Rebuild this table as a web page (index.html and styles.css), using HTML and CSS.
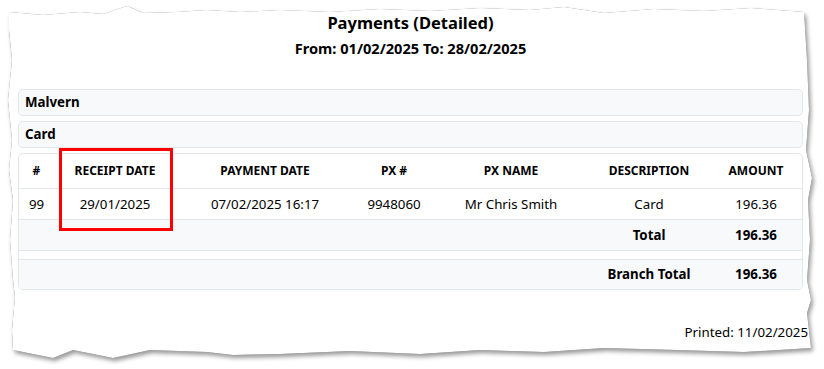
FILE: index.html
```html
<!DOCTYPE html>
<html lang="en">
<head>
<meta charset="utf-8">
<title>Payments (Detailed)</title>
<link rel="stylesheet" href="styles.css">
</head>
<body>
<div class="page">
  <svg class="paper" width="824" height="369" viewBox="0 0 824 369" aria-hidden="true">
    <polygon points="9,12 43,15 80,12 103,14 127,6 143,13 177,12 207,10 240,12 280,10 330,12 380,9 430,11 480,8 530,10 564,7 604,13 654,9 704,11 751,8 804,12 807,60 809,110 806,150 812,178 808,200 810,240 807,280 811,300 807,313 811,348 744,352 677,350 604,348 544,352 480,350 420,354 350,351 280,354 233,355 207,352 150,350 113,358 73,350 53,358 13,350 12,330 15,297 13,280 10,240 13,200 9,170 12,140 8,100 12,60 9,30"/>
  </svg>
  <div class="content">
    <header class="report-head">
      <h1 class="title">Payments (Detailed)</h1>
      <p class="range">From: 01/02/2025 To: 28/02/2025</p>
    </header>
    <div class="group">Malvern</div>
    <div class="group">Card</div>
    <div class="report-table">
      <table>
        <colgroup>
          <col class="c1"><col class="c2"><col class="c3"><col class="c4"><col class="c5"><col class="c6"><col class="c7">
        </colgroup>
        <thead>
          <tr>
            <th>#</th><th>RECEIPT DATE</th><th>PAYMENT DATE</th><th>PX #</th><th>PX NAME</th><th>DESCRIPTION</th><th>AMOUNT</th>
          </tr>
        </thead>
        <tbody>
          <tr class="row">
            <td>99</td><td>29/01/2025</td><td>07/02/2025 16:17</td><td>9948060</td><td>Mr Chris Smith</td><td>Card</td><td>196.36</td>
          </tr>
          <tr class="total">
            <td colspan="5"></td><td>Total</td><td>196.36</td>
          </tr>
          <tr class="spacer"><td colspan="7"></td></tr>
          <tr class="total branch">
            <td colspan="5"></td><td>Branch Total</td><td>196.36</td>
          </tr>
        </tbody>
      </table>
    </div>
    <p class="printed">Printed: 11/02/2025</p>
  </div>
  <div class="highlight"></div>
</div>
</body>
</html>
```

FILE: styles.css
```css
* { box-sizing: border-box; }
html, body { margin: 0; padding: 0; background: #ffffff; }
body {
  font-family: "Noto Sans", "Open Sans", sans-serif;
  color: #000;
  font-size: 13.3px;
}
.page {
  position: relative;
  width: 824px;
  height: 369px;
  overflow: hidden;
}
.paper {
  position: absolute;
  left: 0;
  top: 0;
  fill: #ffffff;
  filter: drop-shadow(0 0 0.6px rgba(0,0,0,0.5)) drop-shadow(2px 3px 2px rgba(0,0,0,0.4));
}
.content {
  position: relative;
  padding: 11px 21px 0 18px;
}
.report-head { text-align: center; }
.title {
  margin: 0;
  font-size: 16.5px;
  line-height: 24px;
  font-weight: 700;
}
.range {
  margin: 1px 0 0;
  font-size: 14.6px;
  line-height: 24px;
  font-weight: 700;
}
.group {
  margin-top: 5px;
  height: 27px;
  border: 1px solid #e4e7ea;
  border-radius: 5px;
  background: #f8f9fa;
  padding: 0 6px;
  font-weight: 700;
  font-size: 13.3px;
  line-height: 24px;
}
.report-head + .group { margin-top: 29px; }
.report-table {
  margin-top: 5px;
  border: 1px solid #e4e7ea;
  border-radius: 5px;
  overflow: hidden;
}
table {
  width: 100%;
  border-collapse: collapse;
  table-layout: fixed;
}
.c1 { width: 35px; }
.c2 { width: 122px; }
.c3 { width: 178px; }
.c4 { width: 80px; }
.c5 { width: 154px; }
.c6 { width: 122px; }
.c7 { width: 92px; }
th, td {
  text-align: center;
  padding: 0 4px;
  white-space: nowrap;
}
th {
  height: 34px;
  font-size: 12px;
  font-weight: 700;
  border-bottom: 1px solid #e4e7ea;
}
.row td {
  height: 31px;
  border-bottom: 1px solid #e4e7ea;
}
.total td {
  height: 31px;
  background: #f8f9fa;
  font-weight: 700;
  border-bottom: 1px solid #e4e7ea;
}
.branch td { height: 30px; border-bottom: 0; }
.spacer td {
  height: 9px;
  padding: 0;
  border-bottom: 1px solid #e4e7ea;
}
.printed {
  margin: 32px -5px 0 0;
  text-align: right;
  line-height: 20px;
}
.highlight {
  position: absolute;
  left: 59px;
  top: 148px;
  width: 114px;
  height: 83px;
  border: 3px solid #ff0000;
}
```
